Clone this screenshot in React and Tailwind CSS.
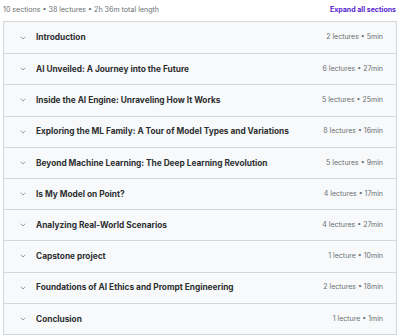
import { ChevronDown } from 'lucide-react';

const sections = [
  ['Introduction', '2 lectures • 5min'],
  ['AI Unveiled: A Journey into the Future', '6 lectures • 27min'],
  ['Inside the AI Engine: Unraveling How It Works', '5 lectures • 25min'],
  ['Exploring the ML Family: A Tour of Model Types and Variations', '8 lectures • 16min'],
  ['Beyond Machine Learning: The Deep Learning Revolution', '5 lectures • 9min'],
  ['Is My Model on Point?', '4 lectures • 17min'],
  ['Analyzing Real-World Scenarios', '4 lectures • 27min'],
  ['Capstone project', '1 lecture • 10min'],
  ['Foundations of AI Ethics and Prompt Engineering', '2 lectures • 18min'],
  ['Conclusion', '1 lecture • 1min'],
];

export default function App() {
  return (
    <div className="w-[400px] h-[336px] bg-white overflow-hidden px-[3px] pt-[3px]" style={{ fontFamily: 'Inter, "Liberation Sans", sans-serif' }}>
      <div className="flex items-center justify-between h-[14px] mb-[4px] pr-[1px]">
        <span className="text-[7.1px] text-[#6a6f73]">10 sections • 38 lectures • 2h 36m total length</span>
        <span className="text-[7px] font-bold text-[#5624d0]">Expand all sections</span>
      </div>
      <div className="border border-[#d1d7dc] w-[394px]">
        {sections.map(([title, meta], i) => (
          <div
            key={i}
            className={`flex items-center h-[31.2px] bg-[#f7f9fa] pl-[15px] pr-[13px] ${i > 0 ? 'border-t border-[#d1d7dc]' : ''}`}
          >
            <ChevronDown size={8} strokeWidth={2} className="text-[#6a6f73] shrink-0" />
            <span className="ml-[9px] text-[8.3px] font-bold text-[#2d2f31] flex-1 truncate">{title}</span>
            <span className="text-[7px] text-[#6a6f73] shrink-0">{meta}</span>
          </div>
        ))}
      </div>
    </div>
  );
}
